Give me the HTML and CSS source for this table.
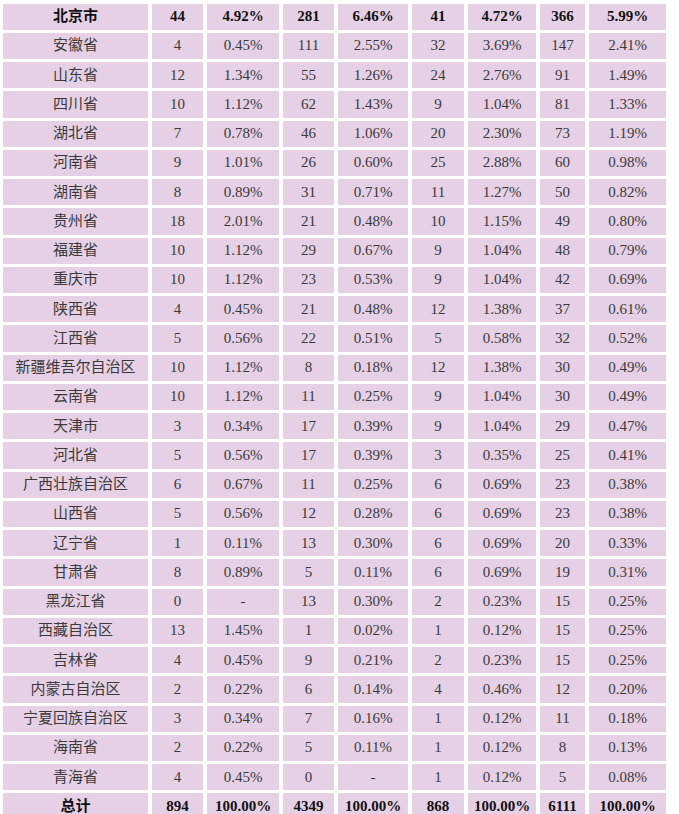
FILE: index.html
```html
<!DOCTYPE html>
<html lang="zh">
<head>
<meta charset="utf-8">
<title>各省统计</title>
<link rel="stylesheet" href="styles.css">
</head>
<body>
<table class="stats">
<colgroup>
<col class="c1"><col class="c2"><col class="c3"><col class="c4"><col class="c5"><col class="c6"><col class="c7"><col class="c8"><col class="c9">
</colgroup>
<tbody>
<tr class="strong"><td>北京市</td><td>44</td><td>4.92%</td><td>281</td><td>6.46%</td><td>41</td><td>4.72%</td><td>366</td><td>5.99%</td></tr>
<tr><td>安徽省</td><td>4</td><td>0.45%</td><td>111</td><td>2.55%</td><td>32</td><td>3.69%</td><td>147</td><td>2.41%</td></tr>
<tr><td>山东省</td><td>12</td><td>1.34%</td><td>55</td><td>1.26%</td><td>24</td><td>2.76%</td><td>91</td><td>1.49%</td></tr>
<tr><td>四川省</td><td>10</td><td>1.12%</td><td>62</td><td>1.43%</td><td>9</td><td>1.04%</td><td>81</td><td>1.33%</td></tr>
<tr><td>湖北省</td><td>7</td><td>0.78%</td><td>46</td><td>1.06%</td><td>20</td><td>2.30%</td><td>73</td><td>1.19%</td></tr>
<tr><td>河南省</td><td>9</td><td>1.01%</td><td>26</td><td>0.60%</td><td>25</td><td>2.88%</td><td>60</td><td>0.98%</td></tr>
<tr><td>湖南省</td><td>8</td><td>0.89%</td><td>31</td><td>0.71%</td><td>11</td><td>1.27%</td><td>50</td><td>0.82%</td></tr>
<tr><td>贵州省</td><td>18</td><td>2.01%</td><td>21</td><td>0.48%</td><td>10</td><td>1.15%</td><td>49</td><td>0.80%</td></tr>
<tr><td>福建省</td><td>10</td><td>1.12%</td><td>29</td><td>0.67%</td><td>9</td><td>1.04%</td><td>48</td><td>0.79%</td></tr>
<tr><td>重庆市</td><td>10</td><td>1.12%</td><td>23</td><td>0.53%</td><td>9</td><td>1.04%</td><td>42</td><td>0.69%</td></tr>
<tr><td>陕西省</td><td>4</td><td>0.45%</td><td>21</td><td>0.48%</td><td>12</td><td>1.38%</td><td>37</td><td>0.61%</td></tr>
<tr><td>江西省</td><td>5</td><td>0.56%</td><td>22</td><td>0.51%</td><td>5</td><td>0.58%</td><td>32</td><td>0.52%</td></tr>
<tr><td>新疆维吾尔自治区</td><td>10</td><td>1.12%</td><td>8</td><td>0.18%</td><td>12</td><td>1.38%</td><td>30</td><td>0.49%</td></tr>
<tr><td>云南省</td><td>10</td><td>1.12%</td><td>11</td><td>0.25%</td><td>9</td><td>1.04%</td><td>30</td><td>0.49%</td></tr>
<tr><td>天津市</td><td>3</td><td>0.34%</td><td>17</td><td>0.39%</td><td>9</td><td>1.04%</td><td>29</td><td>0.47%</td></tr>
<tr><td>河北省</td><td>5</td><td>0.56%</td><td>17</td><td>0.39%</td><td>3</td><td>0.35%</td><td>25</td><td>0.41%</td></tr>
<tr><td>广西壮族自治区</td><td>6</td><td>0.67%</td><td>11</td><td>0.25%</td><td>6</td><td>0.69%</td><td>23</td><td>0.38%</td></tr>
<tr><td>山西省</td><td>5</td><td>0.56%</td><td>12</td><td>0.28%</td><td>6</td><td>0.69%</td><td>23</td><td>0.38%</td></tr>
<tr><td>辽宁省</td><td>1</td><td>0.11%</td><td>13</td><td>0.30%</td><td>6</td><td>0.69%</td><td>20</td><td>0.33%</td></tr>
<tr><td>甘肃省</td><td>8</td><td>0.89%</td><td>5</td><td>0.11%</td><td>6</td><td>0.69%</td><td>19</td><td>0.31%</td></tr>
<tr><td>黑龙江省</td><td>0</td><td>-</td><td>13</td><td>0.30%</td><td>2</td><td>0.23%</td><td>15</td><td>0.25%</td></tr>
<tr><td>西藏自治区</td><td>13</td><td>1.45%</td><td>1</td><td>0.02%</td><td>1</td><td>0.12%</td><td>15</td><td>0.25%</td></tr>
<tr><td>吉林省</td><td>4</td><td>0.45%</td><td>9</td><td>0.21%</td><td>2</td><td>0.23%</td><td>15</td><td>0.25%</td></tr>
<tr><td>内蒙古自治区</td><td>2</td><td>0.22%</td><td>6</td><td>0.14%</td><td>4</td><td>0.46%</td><td>12</td><td>0.20%</td></tr>
<tr><td>宁夏回族自治区</td><td>3</td><td>0.34%</td><td>7</td><td>0.16%</td><td>1</td><td>0.12%</td><td>11</td><td>0.18%</td></tr>
<tr><td>海南省</td><td>2</td><td>0.22%</td><td>5</td><td>0.11%</td><td>1</td><td>0.12%</td><td>8</td><td>0.13%</td></tr>
<tr><td>青海省</td><td>4</td><td>0.45%</td><td>0</td><td>-</td><td>1</td><td>0.12%</td><td>5</td><td>0.08%</td></tr>
<tr class="strong"><td>总计</td><td>894</td><td>100.00%</td><td>4349</td><td>100.00%</td><td>868</td><td>100.00%</td><td>6111</td><td>100.00%</td></tr>
</tbody>
</table>
</body>
</html>
```

FILE: styles.css
```css
html, body {
  margin: 0;
  padding: 0;
  background: #ffffff;
}

body {
  overflow: hidden;
}

.stats {
  border-collapse: separate;
  border-spacing: 4px 3px;
  table-layout: fixed;
  margin: 0.5px 0 0 -1px;
  font-family: "Liberation Serif", "Noto Sans CJK SC", serif;
  font-size: 15px;
  color: #3a3a3a;
}

.stats td {
  background: #e6d0e6;
  height: 26.26px;
  padding: 0;
  text-align: center;
  vertical-align: middle;
  line-height: 1;
  white-space: nowrap;
}

.stats .strong td {
  font-weight: bold;
  color: #111111;
}

.c1 { width: 145px; }
.c2 { width: 51px; }
.c3 { width: 72px; }
.c4 { width: 51px; }
.c5 { width: 70px; }
.c6 { width: 52px; }
.c7 { width: 68px; }
.c8 { width: 45px; }
.c9 { width: 77px; }
```
